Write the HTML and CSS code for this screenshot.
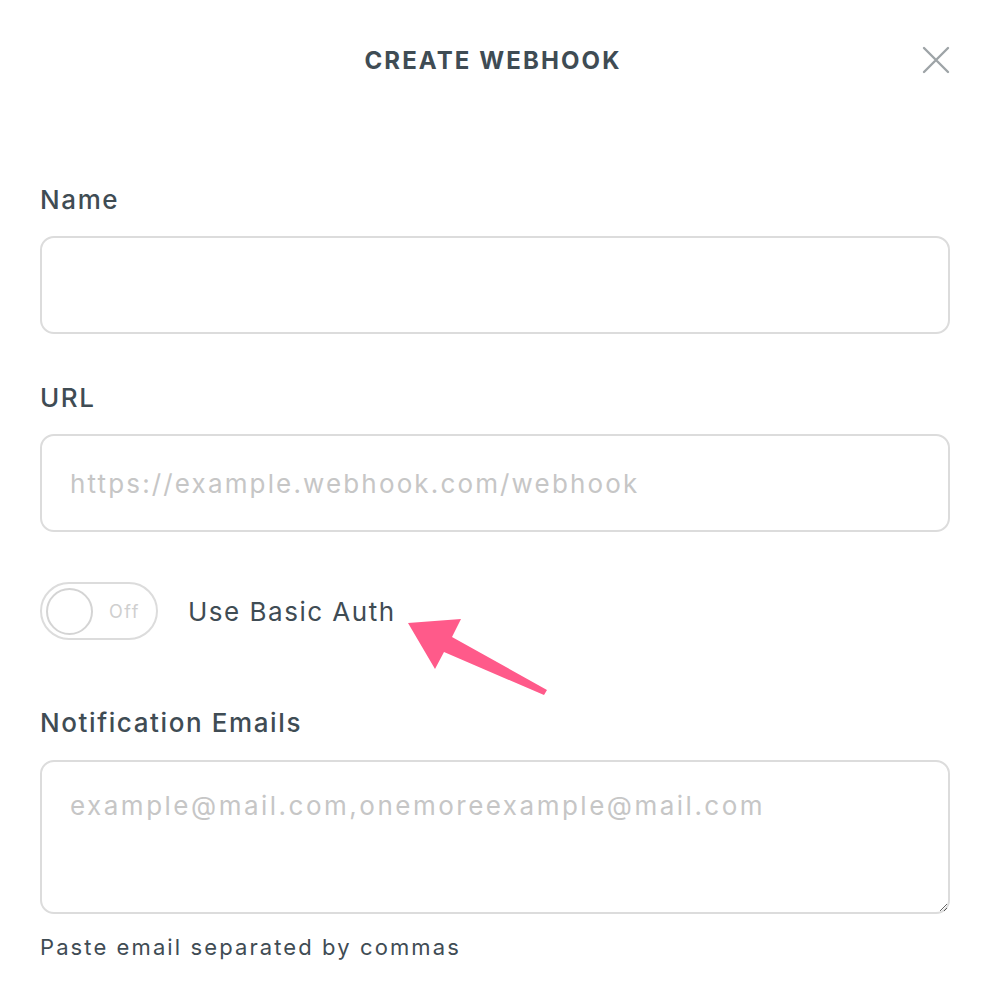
FILE: index.html
```html
<!DOCTYPE html>
<html lang="en">
<head>
    <meta charset="UTF-8">
    <meta name="viewport" content="width=device-width, initial-scale=1.0">
    <title>Create Webhook</title>
    <link rel="stylesheet" href="styles.css">
</head>
<body>
    <div class="modal">
        <!-- Header with title and close button -->
        <div class="modal-header">
            <span></span>
            <h1 class="modal-title">CREATE WEBHOOK</h1>
            <button class="modal-close" aria-label="Close">
                <svg width="28" height="28" viewBox="0 0 28 28">
                    <path d="M2 2 L26 26 M26 2 L2 26" stroke="#9ea4a7" stroke-width="2.4" stroke-linecap="round" fill="none"/>
                </svg>
            </button>
        </div>

        <form class="modal-form">
            <label class="field-label" for="name">Name</label>
            <input class="field-input" id="name" type="text">

            <label class="field-label label-url" for="url">URL</label>
            <input class="field-input" id="url" type="text" placeholder="https://example.webhook.com/webhook">

            <div class="auth-row">
                <div class="toggle">
                    <span class="toggle-knob"></span>
                    <span class="toggle-text">Off</span>
                </div>
                <span class="auth-label">Use Basic Auth</span>
            </div>

            <label class="field-label label-emails" for="emails">Notification Emails</label>
            <textarea class="field-input field-area" id="emails" placeholder="example@mail.com,onemoreexample@mail.com"></textarea>
            <p class="field-help">Paste email separated by commas</p>
        </form>

        <!-- Annotation arrow -->
        <svg class="annotation" width="160" height="100" viewBox="0 0 160 100">
            <path d="M18 23 L71 19 L62 37 L157 90 L154 95 L54 52 L45 69 Z" fill="#ff5a8a"/>
        </svg>
    </div>
</body>
</html>
```

FILE: styles.css
```css
body {
    margin: 0;
    padding: 0;
    background-color: #fff;
    font-family: "Inter", "Noto Sans", sans-serif;
    color: #3f4c54;
}

.modal {
    position: relative;
    width: 986px;
    height: 990px;
    background-color: #fff;
}

/* Header */
.modal-header {
    display: grid;
    grid-template-columns: 1fr auto 1fr;
    align-items: center;
    height: 120px;
}

.modal-title {
    margin: 0;
    font-size: 24px;
    font-weight: 650;
    letter-spacing: 2.1px;
    color: #3f4c54;
}

.modal-close {
    justify-self: end;
    margin-right: 36px;
    padding: 0;
    border: none;
    background: none;
    width: 28px;
    height: 28px;
    cursor: pointer;
}

/* Form */
.modal-form {
    display: flex;
    flex-direction: column;
    padding: 0 36px 0 40px;
}

.field-label {
    margin-top: 64px;
    margin-bottom: 20px;
    font-size: 26px;
    line-height: 32px;
    font-weight: 500;
    letter-spacing: 1.6px;
}

.label-url {
    margin-top: 48px;
}

.label-emails {
    margin-top: 67px;
    margin-bottom: 21px;
}

.field-input {
    box-sizing: border-box;
    height: 98px;
    padding: 0 28px;
    border: 2px solid #dcdcdc;
    border-radius: 14px;
    font-family: inherit;
    font-size: 26px;
    letter-spacing: 2.15px;
    color: #3f4c54;
    outline: none;
}

.field-input::placeholder {
    color: #c6c6c6;
}

.field-area {
    height: 154px;
    padding-top: 28px;
    line-height: 32px;
    letter-spacing: 2.5px;
    resize: vertical;
}

.field-help {
    margin: 19px 0 0;
    font-size: 22px;
    line-height: 28px;
    letter-spacing: 2.1px;
}

/* Basic auth toggle */
.auth-row {
    display: flex;
    align-items: center;
    gap: 30px;
    margin-top: 50px;
}

.toggle {
    box-sizing: border-box;
    display: flex;
    align-items: center;
    width: 118px;
    height: 58px;
    padding: 0 4px;
    border: 2px solid #dcdcdc;
    border-radius: 29px;
}

.toggle-knob {
    box-sizing: border-box;
    width: 47px;
    height: 47px;
    border: 2px solid #d4d4d4;
    border-radius: 50%;
}

.toggle-text {
    margin-left: 16px;
    font-size: 18px;
    letter-spacing: 1.5px;
    color: #cfcfcf;
}

.auth-label {
    font-size: 26px;
    letter-spacing: 1.5px;
}

.annotation {
    position: absolute;
    left: 390px;
    top: 600px;
}
```
